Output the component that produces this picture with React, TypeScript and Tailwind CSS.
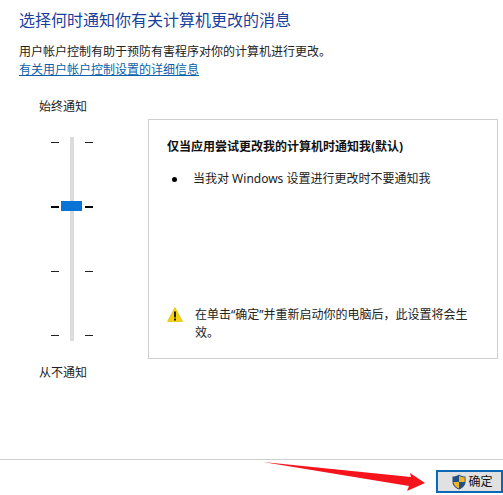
import React from 'react';

const font = '"Noto Sans", "Noto Sans CJK SC", "Liberation Sans", sans-serif';

const TickRow: React.FC<{ active?: boolean }> = ({ active }) => {
  const tick = active ? 'w-2 h-[2px] bg-black' : 'w-2 h-px bg-[#222222]';
  return (
    <div className="flex items-center justify-between w-[42px]">
      <div className={tick} />
      <div className={tick} />
    </div>
  );
};

const App: React.FC = () => {
  return (
    <div className="w-[503px] h-[495px] bg-white flex flex-col overflow-hidden relative" style={{ fontFamily: font }}>
      <div className="flex-1 pl-[19px] pt-[10px]">
        <h1 className="text-[16px] leading-5 font-normal text-[#1a3f9c] whitespace-nowrap">选择何时通知你有关计算机更改的消息</h1>

        <p className="mt-[13px] text-[12px] leading-[18px] text-[#222222]">用户帐户控制有助于预防有害程序对你的计算机进行更改。</p>
        <a className="block text-[12px] leading-[17px] text-[#0a5fa8] underline w-fit">有关用户帐户控制设置的详细信息</a>

        <div className="flex mt-[21px]">
          {/* Slider */}
          <div className="w-[129px] flex flex-col">
            <div className="pl-[20px] text-[12px] leading-4 text-[#222222]">始终通知</div>
            <div className="relative ml-[32px] mt-[22px] w-[42px] h-[204px] flex flex-col justify-between py-[5px]">
              <div className="absolute left-[19px] top-0 bottom-0 w-1 bg-[#dcdcdc]" />
              <div className="absolute left-[10px] top-[64px] w-[21px] h-[10px] bg-[#0a74d6]" />
              <TickRow />
              <TickRow active />
              <TickRow />
              <TickRow />
            </div>
            <div className="pl-[20px] text-[12px] leading-4 text-[#222222] mt-[24px]">从不通知</div>
          </div>

          {/* Description panel */}
          <div className="w-[350px] h-[240px] mt-[20px] border border-[#cfcfcf] flex flex-col justify-between pl-[18px] pr-[10px] pt-[19px] pb-[16px]">
            <div>
              <div className="text-[12px] leading-4 font-bold text-[#111111]">仅当应用尝试更改我的计算机时通知我(默认)</div>
              <div className="flex items-center mt-[16px] text-[12px] leading-4 text-[#222222]">
                <span className="w-[5px] h-[5px] rounded-full bg-black ml-[5px] mr-[16px]" />
                当我对 Windows 设置进行更改时不要通知我
              </div>
            </div>
            <div className="flex items-start">
              <svg width="16" height="15" viewBox="0 0 16 15" className="mt-px mr-[12px] shrink-0">
                <path d="M8 0.5 L15.5 14.5 L0.5 14.5 Z" fill="#f7d308" stroke="#e0b000" strokeWidth="0.6" />
                <rect x="7" y="4.5" width="2" height="6" fill="#222" />
                <rect x="7" y="11.5" width="2" height="2" fill="#222" />
              </svg>
              <p className="text-[12px] leading-[18px] text-[#222222] w-[290px]">在单击“确定”并重新启动你的电脑后，此设置将会生效。</p>
            </div>
          </div>
        </div>
      </div>

      {/* Footer */}
      <div className="h-[36px] border-t border-[#cfcfcf] flex justify-end items-end pb-[2px]">
        <button className="w-[67px] h-[23px] bg-[#e1e1e1] border-2 border-[#0a68b4] flex items-center justify-center pl-[6px] text-[12px] text-[#111111]">
          <svg width="14" height="16" viewBox="0 0 14 16" className="mr-[2px]">
            <path d="M7 0.5 C9 2 11 2.5 13.5 2.5 L13.5 8 C13.5 11.5 10.5 14 7 15.5 C3.5 14 0.5 11.5 0.5 8 L0.5 2.5 C3 2.5 5 2 7 0.5 Z" fill="#1f4f86" />
            <path d="M7 1.5 C9 3 11 3.3 12.7 3.3 L12.7 8 L7 8 Z" fill="#eeb422" />
            <path d="M7 8 L1.3 8 C1.5 11 4 13.3 7 14.6 Z" fill="#eeb422" />
          </svg>
          确定
        </button>
      </div>

      {/* Red annotation arrow */}
      <svg width="503" height="495" className="absolute inset-0 pointer-events-none">
        <path d="M263 462 L411 477 L410 473 L425 483 L407 491 L409 486 Z" fill="#f5141c" />
      </svg>
    </div>
  );
};

export default App;
